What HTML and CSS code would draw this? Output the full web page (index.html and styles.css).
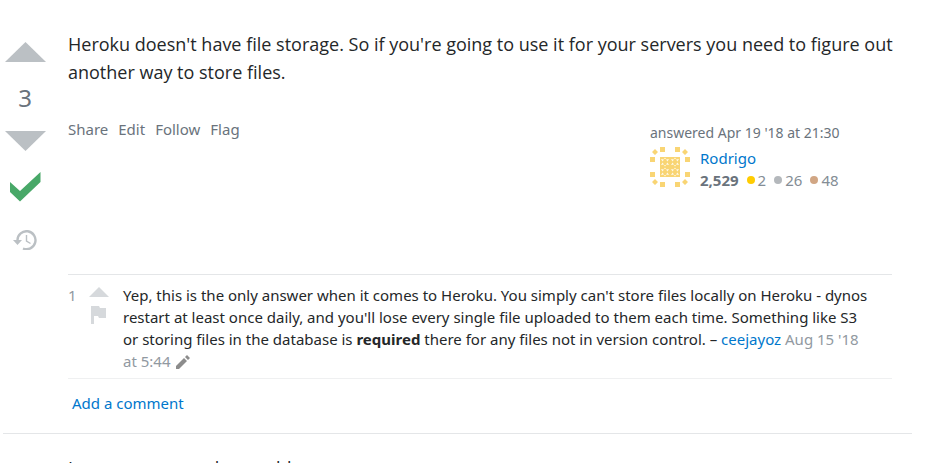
FILE: index.html
```html
<!DOCTYPE html>
<html lang="en">
<head>
<meta charset="utf-8">
<title>Answer</title>
<link rel="stylesheet" href="styles.css">
</head>
<body>
<main>
<article class="answer">
  <aside class="votes">
    <button class="icon-button" aria-label="Up vote"><svg width="42" height="22" viewBox="0 0 42 22"><path d="M1 20 21.500 0 42 20z" fill="#bbc0c4"/></svg></button>
    <span class="score">3</span>
    <button class="icon-button" aria-label="Down vote"><svg width="42" height="22" viewBox="0 0 42 22"><path d="M1 1l20.500 20L42 1z" fill="#bbc0c4"/></svg></button>
    <svg class="accepted" width="32" height="30" viewBox="0 0 32 30" role="img" aria-label="Accepted"><path d="M1 10v10l10 9.500L31.500 10V0L11 19z" fill="#48a868"/></svg>
    <button class="icon-button" aria-label="Show activity"><svg width="24" height="20" viewBox="0 0 24 20"><path d="M4.500 10A9 9 0 1 1 10 18.500" fill="none" stroke="#bbc0c4" stroke-width="2.400"/><path d="M0 10h9l-4.500 5z" fill="#bbc0c4"/><path d="M13.500 5v6l4 2.500" fill="none" stroke="#bbc0c4" stroke-width="1.400"/></svg></button>
  </aside>
  <div class="content">
    <p class="body-text">Heroku doesn't have file storage. So if you're going to use it for your servers you need to figure out another way to store files.</p>
    <div class="meta">
      <nav class="actions"><a href="#">Share</a><a href="#">Edit</a><a href="#">Follow</a><a href="#">Flag</a></nav>
      <section class="author">
        <time>answered Apr 19 '18 at 21:30</time>
        <div class="user">
          <svg class="avatar" width="40" height="40" viewBox="0 0 40 40" role="img" aria-label="Rodrigo">
            <g fill="#f9d574"><path d="M10 0h5v5h-5zM25 0h5v5h-5zM10 35h5v5h-5zM25 35h5v5h-5zM0 10h5v5H0zM35 10h5v5h-5zM0 25h5v5H0zM35 25h5v5h-5z"/><path d="M5 2l3 3-3 3-3-3zM35 2l3 3-3 3-3-3zM5 32l3 3-3 3-3-3zM35 32l3 3-3 3-3-3z"/><path d="M10 10h20v20H10z"/></g>
            <g fill="#fff" fill-opacity=".85"><path id="petals" d="M11 12l3 .5-1.500 2zM19 12l-3 .5 1.500 2zM11 18l3-.5-1.500-2zM19 18l-3-.5 1.500-2zM15 10.500l1 1.500h-2zM15 19.500l1-1.500h-2z"/><use href="#petals" x="10"/><use href="#petals" y="10"/><use href="#petals" x="10" y="10"/></g>
          </svg>
          <div class="user-info">
            <a href="#">Rodrigo</a>
            <div class="reputation"><strong>2,529</strong><span class="badge gold">2</span><span class="badge silver">26</span><span class="badge bronze">48</span></div>
          </div>
        </div>
      </section>
    </div>
    <section class="comments">
      <div class="comment">
        <span class="comment-score">1</span>
        <div class="comment-actions">
          <button class="icon-button" aria-label="Upvote comment"><svg width="20" height="10" viewBox="0 0 20 10"><path d="M0 10 10 0l10 10z" fill="#d6d9dc"/></svg></button>
          <button class="icon-button" aria-label="Flag comment"><svg width="18" height="18" viewBox="0 0 18 18"><path d="M2 0h8l1 2h6v10h-7l-1-2H5v8H2z" fill="#d6d9dc"/></svg></button>
        </div>
        <p class="comment-text">Yep, this is the only answer when it comes to Heroku. You simply can't store files locally on Heroku - dynos restart at least once daily, and you'll lose every single file uploaded to them each time. Something like S3 or storing files in the database is <strong>required</strong> there for any files not in version control. – <a href="#">ceejayoz</a> <time>Aug 15 '18 <span class="clock">at 5:44</span></time> <svg class="pencil" width="14" height="14" viewBox="0 0 14 14" role="img" aria-label="Edited"><path d="M0 11v3h3l8-8-3-3zM9 2l3 3 2-2-3-3z" fill="#8c8c8c"/></svg></p>
      </div>
    </section>
    <a class="add-comment" href="#">Add a comment</a>
  </div>
</article>
<article class="answer next"><p class="body-text">I can see now we have add</p></article>
</main>
</body>
</html>
```

FILE: styles.css
```css
* { box-sizing: border-box; }
body { margin: 0; overflow: hidden; height: 100vh; background: #fff; color: #242729; font: 15px/22px "Noto Sans", "Open Sans", sans-serif; }
main { margin: 0 29px 0 3px; }
p { margin: 0; }
a { color: #0077cc; text-decoration: none; }
.icon-button { display: block; padding: 0; border: 0; background: none; line-height: 0; cursor: pointer; }
svg { display: block; }
.answer { display: flex; gap: 21px; padding: 30px 20px 19px 0; border-bottom: 1px solid #e4e6e8; }
.votes { flex: 0 0 44px; display: flex; flex-direction: column; align-items: center; padding-top: 12px; }
.score { margin: 20px 0 18px; color: #6a737c; font-size: 24px; line-height: 28px; }
.accepted { margin: 20px 0 28px; }
.content { flex: 1; min-width: 0; }
.body-text { margin-right: -8px; font-family: "Open Sans", "Noto Sans", sans-serif; font-size: 18px; line-height: 28px; }
.meta { display: flex; justify-content: space-between; min-height: 188px; padding-top: 32px; }
.actions { display: flex; align-items: flex-start; gap: 10px; }
.actions a { color: #6a737c; }
.author { width: 242px; padding-top: 4px; color: #6a737c; }
.author time { display: block; font-size: 14px; }
.user { display: flex; gap: 10px; margin-top: 3px; }
.user-info { line-height: 22px; }
.user-info a { display: block; }
.reputation { display: flex; align-items: center; }
.badge { display: flex; align-items: center; gap: 3px; margin-left: 8px; color: #848d95; }
.badge::before { content: ""; width: 8px; height: 8px; border-radius: 50%; background: #ffcc01; }
.silver::before { background: #b4b8bc; }
.bronze::before { background: #d1a684; }
.comments { border-top: 1px solid #e4e6e8; border-bottom: 1px solid #eff0f1; }
.comment { display: flex; padding: 9px 0 6px; }
.comment-score { width: 21px; color: #9199a1; }
.comment-actions { width: 34px; display: flex; flex-direction: column; gap: 9px; padding-top: 3px; }
.comment-text { flex: 1; padding-right: 18px; }
.comment-text time { color: #9199a1; }
.clock { white-space: nowrap; }
.pencil { display: inline-block; margin-left: 2px; vertical-align: -2px; }
.add-comment { display: block; width: max-content; margin: 13px 0 0 4px; }
.next { padding: 20px 0 0 65px; border: 0; }
```
